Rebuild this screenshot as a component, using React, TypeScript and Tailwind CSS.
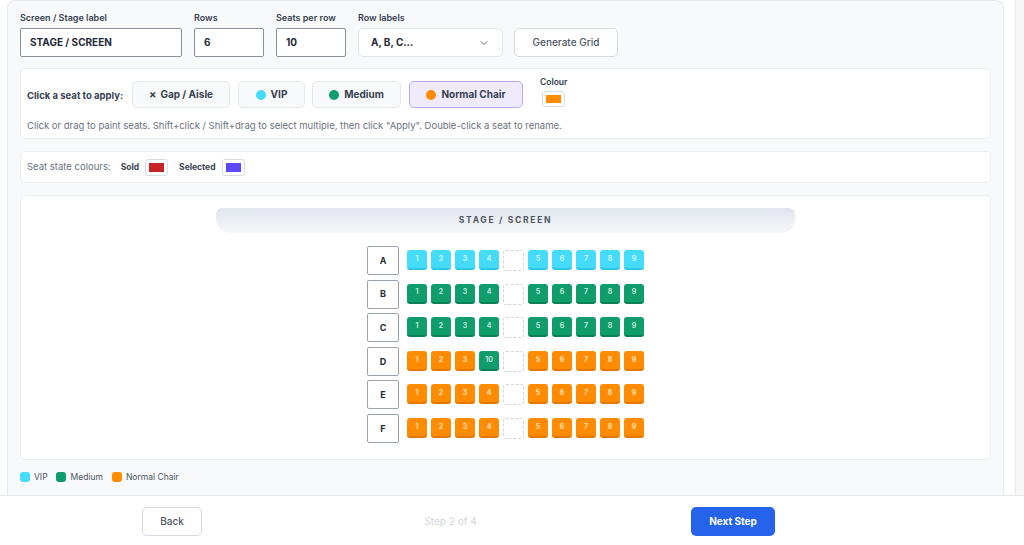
import { ChevronDown } from 'lucide-react'

type Kind = 'vip' | 'medium' | 'normal'

const seatColor: Record<Kind, string> = {
  vip: 'bg-[#45dcfb] border-[#2cc6e8]',
  medium: 'bg-[#0f9d6c] border-[#0b8059]',
  normal: 'bg-[#ff8c00] border-[#e67800]',
}

const rows: { label: string; seats: { n: string; kind: Kind }[] }[] = [
  { label: 'A', seats: ['1', '2', '3', '4', '5', '6', '7', '8', '9'].map((n) => ({ n, kind: 'vip' as Kind })) },
  { label: 'B', seats: ['1', '2', '3', '4', '5', '6', '7', '8', '9'].map((n) => ({ n, kind: 'medium' as Kind })) },
  { label: 'C', seats: ['1', '2', '3', '4', '5', '6', '7', '8', '9'].map((n) => ({ n, kind: 'medium' as Kind })) },
  {
    label: 'D',
    seats: ['1', '2', '3', '10', '5', '6', '7', '8', '9'].map((n) => ({ n, kind: (n === '10' ? 'medium' : 'normal') as Kind })),
  },
  { label: 'E', seats: ['1', '2', '3', '4', '5', '6', '7', '8', '9'].map((n) => ({ n, kind: 'normal' as Kind })) },
  { label: 'F', seats: ['1', '2', '3', '4', '5', '6', '7', '8', '9'].map((n) => ({ n, kind: 'normal' as Kind })) },
]

function Seat({ n, kind }: { n: string; kind: Kind }) {
  return (
    <div
      className={`w-[20px] h-[20px] rounded-[3px] border-b-2 flex items-center justify-center text-[7px] font-semibold text-white/80 ${seatColor[kind]}`}
    >
      {n}
    </div>
  )
}

function Field({ label, width, value }: { label: string; width: string; value: string }) {
  return (
    <div className={`flex flex-col gap-[4px] ${width}`}>
      <span className="text-[9px] leading-[12px] font-semibold text-[#374151]">{label}</span>
      <div className="h-[29px] border border-[#8b9099] rounded-[2px] bg-white flex items-center px-[9px] text-[10px] font-bold text-[#1f2937]">
        {value}
      </div>
    </div>
  )
}

export default function App() {
  return (
    <div className="w-[1024px] h-[545px] flex flex-col bg-white font-['Inter',sans-serif] overflow-hidden">
      <div className="flex h-[495px]">
        <div className="flex-1 pl-[7px] pr-[11px]">
          <div className="h-full rounded-t-lg border border-b-0 border-[#e8eaed] bg-[#f8f9fa] px-[12px] pt-[11px]">
            {/* grid settings */}
            <div className="flex items-end">
              <Field label="Screen / Stage label" width="w-[162px]" value="STAGE / SCREEN" />
              <div className="w-[12px]" />
              <Field label="Rows" width="w-[70px]" value="6" />
              <div className="w-[12px]" />
              <Field label="Seats per row" width="w-[70px]" value="10" />
              <div className="w-[12px]" />
              <div className="flex flex-col gap-[4px] w-[145px]">
                <span className="text-[9px] leading-[12px] font-semibold text-[#374151]">Row labels</span>
                <div className="h-[29px] border border-[#e2e5e9] rounded-[5px] bg-white flex items-center justify-between pl-[12px] pr-[12px] text-[10px] font-bold text-[#1f2937]">
                  A, B, C...
                  <ChevronDown size={12} className="text-[#6b7280]" />
                </div>
              </div>
              <div className="w-[11px]" />
              <button className="w-[104px] h-[29px] border border-[#d7dbe0] rounded-[5px] bg-white text-[10px] font-medium text-[#4b5563]">
                Generate Grid
              </button>
            </div>

            {/* paint tools */}
            <div className="mt-[11px] h-[71px] rounded-[5px] border border-[#eceef0] bg-white px-[6px] pt-[12px]">
              <div className="flex items-start">
                <span className="mt-[8px] w-[105px] text-[9.5px] font-bold text-[#374151]">Click a seat to apply:</span>
                <button className="w-[98px] h-[27px] rounded-[5px] border border-[#e5e7eb] bg-[#f8f9fa] text-[10px] font-bold text-[#374151] flex items-center justify-center gap-[4px]">
                  <span className="text-[11px]">×</span> Gap / Aisle
                </button>
                <button className="ml-[8px] w-[67px] h-[27px] rounded-[5px] border border-[#e5e7eb] bg-[#f8f9fa] text-[10px] font-bold text-[#374151] flex items-center justify-center gap-[5px]">
                  <span className="w-[10px] h-[10px] rounded-full bg-[#45dcfb]" /> VIP
                </button>
                <button className="ml-[7px] w-[89px] h-[27px] rounded-[5px] border border-[#e5e7eb] bg-[#f8f9fa] text-[10px] font-bold text-[#374151] flex items-center justify-center gap-[5px]">
                  <span className="w-[10px] h-[10px] rounded-full bg-[#0f9d6c]" /> Medium
                </button>
                <button className="ml-[8px] w-[114px] h-[27px] rounded-[5px] border border-[#b7a8f8] bg-[#efebfd] text-[10px] font-bold text-[#374151] flex items-center justify-center gap-[5px]">
                  <span className="w-[10px] h-[10px] rounded-full bg-[#ff8c00]" /> Normal Chair
                </button>
                <div className="ml-[17px] flex flex-col gap-[3px] -mt-[4px]">
                  <span className="text-[8.5px] font-semibold text-[#374151] leading-[11px]">Colour</span>
                  <div className="ml-[2px] w-[23px] h-[16px] rounded-[3px] border border-[#d9dce1] bg-white p-[3px]">
                    <div className="w-full h-full bg-[#ff8c00]" />
                  </div>
                </div>
              </div>
              <p className="mt-[12px] text-[9.5px] text-[#6b7280] leading-[12px]">
                Click or drag to paint seats. Shift+click / Shift+drag to select multiple, then click "Apply". Double-click a seat to rename.
              </p>
            </div>

            {/* seat states */}
            <div className="mt-[12px] h-[32px] rounded-[5px] border border-[#eceef0] bg-white px-[6px] flex items-center">
              <span className="text-[9.5px] text-[#6b7280]">Seat state colours:</span>
              <span className="ml-[10px] text-[8.5px] font-bold text-[#374151]">Sold</span>
              <div className="ml-[6px] w-[23px] h-[17px] rounded-[3px] border border-[#d9dce1] bg-white p-[3px]">
                <div className="w-full h-full bg-[#c62424]" />
              </div>
              <span className="ml-[11px] text-[8.5px] font-bold text-[#374151]">Selected</span>
              <div className="ml-[6px] w-[23px] h-[17px] rounded-[3px] border border-[#d9dce1] bg-white p-[3px]">
                <div className="w-full h-full bg-[#5b48f6]" />
              </div>
            </div>

            {/* seat map */}
            <div className="mt-[12px] h-[265px] rounded-[5px] border border-[#eceef0] bg-white pt-[12px] flex flex-col items-center">
              <div className="w-[579px] h-[25px] rounded-t-[6px] rounded-b-[14px] bg-gradient-to-b from-[#e1e5ed] to-[#f6f7fa] flex items-center justify-center text-[8.5px] font-bold tracking-[0.2em] text-[#4b5563]">
                STAGE / SCREEN
              </div>
              <div className="mt-[13px] flex flex-col gap-[4.6px]">
                {rows.map((r) => (
                  <div key={r.label} className="flex items-center h-[29px]">
                    <div className="w-[32px] h-[29px] border border-[#9ca3af] rounded-[2px] flex items-center justify-center text-[9px] font-bold text-[#1f2937]">
                      {r.label}
                    </div>
                    <div className="ml-[8px] flex gap-[4px]">
                      {r.seats.slice(0, 4).map((s, i) => (
                        <Seat key={i} n={s.n} kind={s.kind} />
                      ))}
                      <div className="w-[21px] h-[21px] rounded-[3px] border border-dashed border-[#d1d5db]" />
                      {r.seats.slice(4).map((s, i) => (
                        <Seat key={i + 4} n={s.n} kind={s.kind} />
                      ))}
                    </div>
                  </div>
                ))}
              </div>
            </div>

            {/* legend */}
            <div className="mt-[11px] flex items-center text-[8.5px] text-[#4b5563]">
              <span className="w-[10px] h-[10px] rounded-[3px] bg-[#45dcfb]" />
              <span className="ml-[4px]">VIP</span>
              <span className="ml-[8px] w-[10px] h-[10px] rounded-[3px] bg-[#0f9d6c]" />
              <span className="ml-[5px]">Medium</span>
              <span className="ml-[9px] w-[10px] h-[10px] rounded-[3px] bg-[#ff8c00]" />
              <span className="ml-[4px]">Normal Chair</span>
            </div>
          </div>
        </div>
        <div className="w-[9px] border-l border-[#ebebeb] bg-[#f7f7f7]" />
      </div>

      <footer className="flex-1 border-t border-[#e5e7eb] bg-white flex items-start pt-[11px]">
        <div className="ml-[142px] w-[633px] flex items-center justify-between">
          <button className="w-[60px] h-[29px] rounded-[5px] border border-[#d5dae1] bg-white text-[10px] font-medium text-[#4b5563]">
            Back
          </button>
          <span className="ml-[8px] text-[10px] text-[#d1d5db]">Step 2 of 4</span>
          <button className="w-[84px] h-[29px] rounded-[5px] bg-[#2563eb] text-[10px] font-bold text-white">
            Next Step
          </button>
        </div>
      </footer>
    </div>
  )
}
